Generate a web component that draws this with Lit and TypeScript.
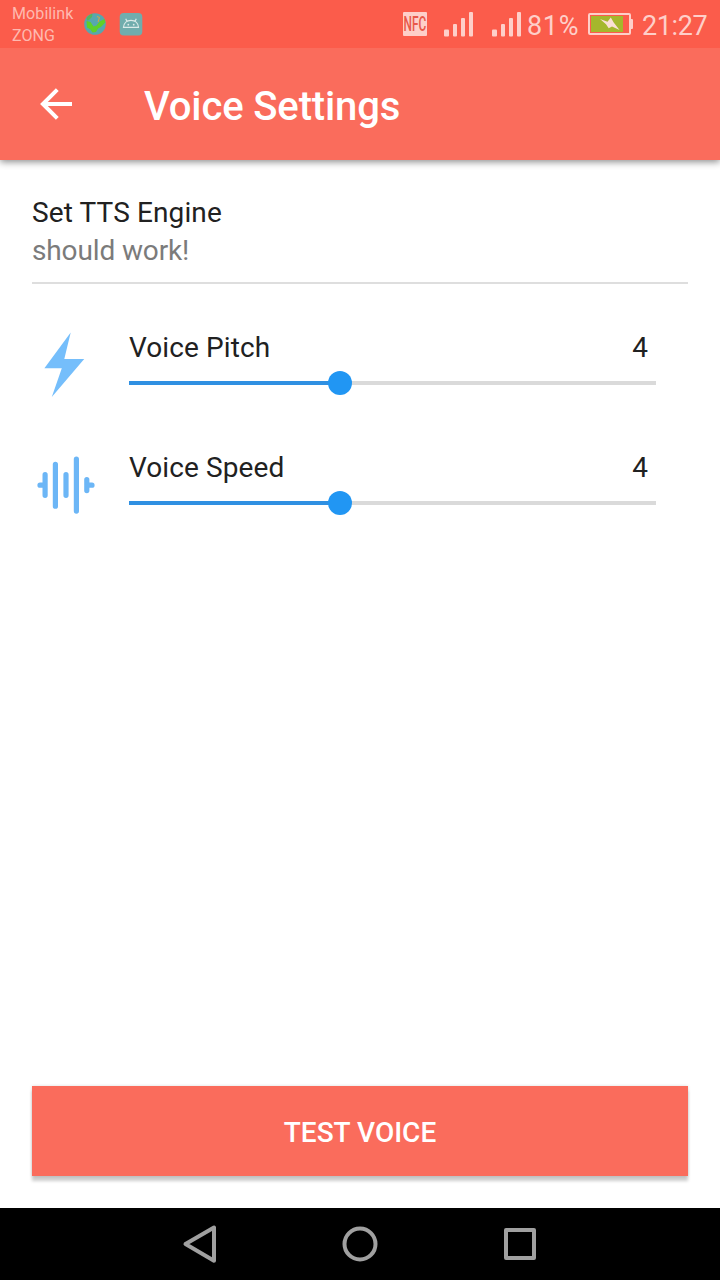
import { LitElement, html, css, svg } from "lit";
import { customElement, property } from "lit/decorators.js";

@customElement("status-bar")
class StatusBar extends LitElement {
  static styles = css`
    :host { display: flex; height: 48px; background: #fb5c4b; color: #fecfc9; align-items: stretch; z-index: 1; }
    .carriers { width: 84px; padding: 3px 0 0 12px; box-sizing: border-box; font-size: 16px; line-height: 22px; color: #feb9b0; white-space: nowrap; letter-spacing: 0.1px; }
    .apps { flex: none; }
    .signals { flex: none; margin-left: auto; }
    .percent { width: 61px; font-size: 27px; line-height: 48px; padding-top: 2px; box-sizing: border-box; white-space: nowrap; letter-spacing: 0.7px; }
    .battery { flex: none; }
    .time { width: 79px; font-size: 27px; line-height: 48px; padding: 2px 0 0 1px; box-sizing: border-box; white-space: nowrap; letter-spacing: -0.4px; }
    .nfc { font: 500 20.5px Roboto, sans-serif; }
    svg { display: block; }
  `;

  render() {
    const bars = (x: number) => svg`
      <rect x=${x} y="29.5" width="5" height="7" rx="1"/>
      <rect x=${x + 9} y="24" width="4" height="12.5" rx="1"/>
      <rect x=${x + 17} y="18" width="4" height="18.5" rx="1"/>
      <rect x=${x + 25} y="12" width="4" height="24.5" rx="1"/>`;
    return html`
      <div class="carriers"><div>Mobilink</div><div>ZONG</div></div>
      <svg class="apps" width="64" height="48" viewBox="84 0 64 48">
        <circle cx="95" cy="24" r="10.8" fill="#57a7ae"/>
        <path d="M86.500 18c1.500-2.200 3.500-3.700 6-4.300l-.5 3.300-3 3-2 .5z" fill="#58b35c"/>
        <path d="M86.500 21l4 1 3 4.500 3-1 3-4 5-2.500 .9 3.500-4.500 4.500-2.900 1.500-2 3.500-3.500.5-2-3-3.500-2z" fill="#5fd028"/>
        <path d="M97 16.500l2.500 1-1.500 4.500" stroke="#d2a743" stroke-width="1" fill="none"/>
        <rect x="119.700" y="13" width="22.600" height="22.400" rx="4" fill="#70adad"/>
        <path d="M123.500 27.400c.3-4.500 3.600-7 7.500-7s7.200 2.500 7.500 7zM127 21.300l-1.300-2.500M135 21.300l1.300-2.500" fill="none" stroke="#dcebe9" stroke-width="1.200"/>
        <circle cx="128.300" cy="24.700" r=".9" fill="#dcebe9"/><circle cx="133.700" cy="24.700" r=".9" fill="#dcebe9"/>
      </svg>
      <svg class="signals" width="124" height="48" viewBox="403 0 124 48" fill="#fecfc9">
        <rect x="403" y="12" width="24" height="24" rx="1"/>
        <text class="nfc" transform="translate(403.500 31.200) scale(.58 1)" fill="#e95849">NFC</text>
        ${bars(444)}${bars(492)}
      </svg>
      <div class="percent">81%</div>
      <svg class="battery" width="53" height="48" viewBox="588 0 53 48">
        <rect x="589" y="14" width="41" height="20" rx="1" fill="none" stroke="#fecfc9" stroke-width="2"/>
        <rect x="591" y="16" width="32" height="16" fill="#a5b72c"/>
        <path d="M631 19h1a1 1 0 0 1 1 1v8a1 1 0 0 1-1 1h-1z" fill="#fecfc9"/>
        <path d="M600 19L607.500 21.700L610.800 17.500L613.700 22.500L619.500 30L612 26.600L608.700 28.200L606 24.300Z" fill="#fbe0d3"/>
      </svg>
      <div class="time">21:27</div>
    `;
  }
}

@customElement("voice-slider")
class VoiceSlider extends LitElement {
  static styles = css`
    :host { display: flex; height: 72px; gap: 33px; padding-right: 32px; }
    .icon { flex: none; }
    .main { flex: 1; padding-top: 1px; }
    .head { display: flex; justify-content: space-between; line-height: 38px; padding-right: 8px; color: #212121; letter-spacing: 0.1px; }
    .slider { display: flex; align-items: center; height: 24px; margin-top: 4px; }
    .filled { height: 4px; background: #2f90e2; margin-right: -12px; }
    .thumb { width: 24px; height: 24px; border-radius: 50%; background: #2196f3; flex: none; z-index: 1; }
    .rest { flex: 1; height: 4px; background: #dadada; margin-left: -1px; }
  `;
  @property() label = "";
  @property({ type: Number }) value = 0;
  @property({ type: Number }) max = 10;
  @property() icon = "";

  render() {
    const glyph = this.icon === "bolt"
      ? svg`<path d="M38.700 4.500L32.300 31H52.200L19.800 69L29.800 40.300H12.400Z" fill="#75befb"/>`
      : svg`<path d="M13.100 26.700v20.600M23.400 16.300v41.900M34 26.700v20.600M44.400 11.200v51.900M54.800 31.700v10.900M8 37.200h5M54.800 37.200h5.200"
          fill="none" stroke="#6cb6f6" stroke-width="5.200" stroke-linecap="round"/>`;
    return html`
      <svg class="icon" width="64" height="72" viewBox="0 0 64 72">${glyph}</svg>
      <div class="main">
        <div class="head"><span>${this.label}</span><span>${this.value}</span></div>
        <div class="slider">
          <div class="filled" style="width:${(this.value / this.max) * 100}%"></div>
          <div class="thumb"></div>
          <div class="rest"></div>
        </div>
      </div>
    `;
  }
}

@customElement("app-root")
class AppRoot extends LitElement {
  static styles = css`
    :host { display: flex; flex-direction: column; height: 1280px; background: #fff; font: 400 28px Roboto, sans-serif; overflow: hidden; }
    .appbar { display: flex; align-items: center; height: 112px; background: #fa6c5c; color: #fff; box-shadow: 0 2px 7px rgba(0, 0, 0, 0.45); }
    .back { margin-left: 32px; flex: none; }
    .title { margin: 0 0 0 64px; font-size: 40px; font-weight: 500; line-height: 48px; padding-top: 5px; white-space: nowrap; letter-spacing: -0.13px; }
    .content { flex: 1; display: flex; flex-direction: column; padding: 34px 32px 32px; }
    .engine { border-bottom: 2px solid #dedede; padding-bottom: 12px; line-height: 38px; }
    .name { color: #212121; letter-spacing: 0.12px; }
    .hint { color: #7b7b7b; letter-spacing: -0.13px; }
    .sliders { display: flex; flex-direction: column; gap: 48px; margin-top: 44px; }
    .test { margin-top: auto; height: 90px; border: 0; padding: 3px 0 0; background: #fa6c5c; color: #fff; font: 500 28px Roboto, sans-serif; box-shadow: 0 5px 3px rgba(0, 0, 0, 0.2), 0 0 3px rgba(0, 0, 0, 0.14); }
    .nav { display: flex; justify-content: center; gap: 88px; height: 72px; background: #000; align-items: center; }
  `;

  render() {
    return html`
      <status-bar></status-bar>
      <header class="appbar">
        <svg class="back" width="48" height="48" viewBox="0 0 48 48" fill="none" stroke="#fff" stroke-width="4">
          <path d="M40 24H11M25.300 9.600L10.900 24L25.300 38.400"/>
        </svg>
        <h1 class="title">Voice Settings</h1>
      </header>
      <main class="content">
        <section class="engine">
          <div class="name">Set TTS Engine</div>
          <div class="hint">should work!</div>
        </section>
        <section class="sliders">
          <voice-slider label="Voice Pitch" icon="bolt" .value=${4}></voice-slider>
          <voice-slider label="Voice Speed" icon="wave" .value=${4}></voice-slider>
        </section>
        <button class="test">TEST VOICE</button>
      </main>
      <nav class="nav">
        <svg width="72" height="72" viewBox="0 0 72 72" fill="none" stroke="#a0a0a0" stroke-width="4" stroke-linejoin="round">
          <path d="M21.500 36L50 19.500V52.700Z"/>
        </svg>
        <svg width="72" height="72" viewBox="0 0 72 72" fill="none" stroke="#a0a0a0" stroke-width="4"><circle cx="36" cy="36" r="15.500"/></svg>
        <svg width="72" height="72" viewBox="0 0 72 72" fill="none" stroke="#a0a0a0" stroke-width="4" stroke-linejoin="round"><rect x="22" y="22" width="28" height="28"/></svg>
      </nav>
    `;
  }
}
